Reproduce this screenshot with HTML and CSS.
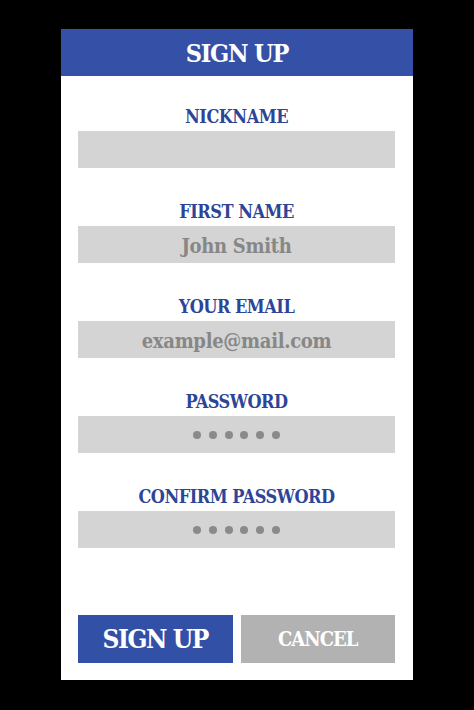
FILE: index.html
```html
<!DOCTYPE html>
<html>
<head>
<meta charset="utf-8">
<link rel="stylesheet" href="styles.css">
</head>
<body>
<div class="card">
  <div class="header">SIGN UP</div>
  <div class="form">
    <div class="field">
      <div class="label">NICKNAME</div>
      <div class="input"></div>
    </div>
    <div class="field">
      <div class="label">FIRST NAME</div>
      <div class="input">John Smith</div>
    </div>
    <div class="field">
      <div class="label">YOUR EMAIL</div>
      <div class="input">example@mail.com</div>
    </div>
    <div class="field">
      <div class="label">PASSWORD</div>
      <div class="input dots"><span></span><span></span><span></span><span></span><span></span><span></span></div>
    </div>
    <div class="field">
      <div class="label">CONFIRM PASSWORD</div>
      <div class="input dots"><span></span><span></span><span></span><span></span><span></span><span></span></div>
    </div>
    <div class="buttons">
      <div class="btn primary">SIGN UP</div>
      <div class="btn secondary">CANCEL</div>
    </div>
  </div>
</div>
</body>
</html>
```
FILE: styles.css
```css
html, body {
  margin: 0;
  padding: 0;
  background: #000;
}
body {
  width: 474px;
  height: 710px;
  font-family: "DejaVu Serif", "Liberation Serif", serif;
  font-stretch: condensed;
  font-weight: bold;
  overflow: hidden;
}
.card {
  margin: 29px 0 0 61px;
  width: 352px;
  height: 651px;
  background: #fff;
  display: flex;
  flex-direction: column;
}
.header {
  height: 47px;
  background: #3451a7;
  color: #fff;
  font-size: 25px;
  letter-spacing: -1.2px;
  line-height: 49px;
  text-align: center;
}
.form {
  flex: 1;
  display: flex;
  flex-direction: column;
  padding: 28px 18px 17px 17px;
  gap: 31px;
}
.field {
  display: flex;
  flex-direction: column;
  gap: 3px;
}
.label {
  height: 24px;
  line-height: 26px;
  font-size: 18px;
  letter-spacing: -0.5px;
  color: #2d4597;
  text-align: center;
}
.input {
  height: 37px;
  background: #d4d4d4;
  color: #878787;
  font-size: 20px;
  letter-spacing: -0.3px;
  line-height: 40px;
  text-align: center;
  overflow: hidden;
}
.dots {
  display: flex;
  justify-content: center;
  align-items: center;
  gap: 7.7px;
}
.dots span {
  width: 8px;
  height: 8px;
  border-radius: 50%;
  background: #8a8a8a;
}
.buttons {
  margin-top: auto;
  display: flex;
  gap: 8px;
}
.btn {
  flex: 1;
  height: 48px;
  color: #fff;
  text-align: center;
  line-height: 48px;
}
.primary {
  background: #3350a7;
  font-size: 26px;
  letter-spacing: -1.4px;
}
.secondary {
  background: #b2b2b2;
  font-size: 20px;
  letter-spacing: -1px;
}
```
